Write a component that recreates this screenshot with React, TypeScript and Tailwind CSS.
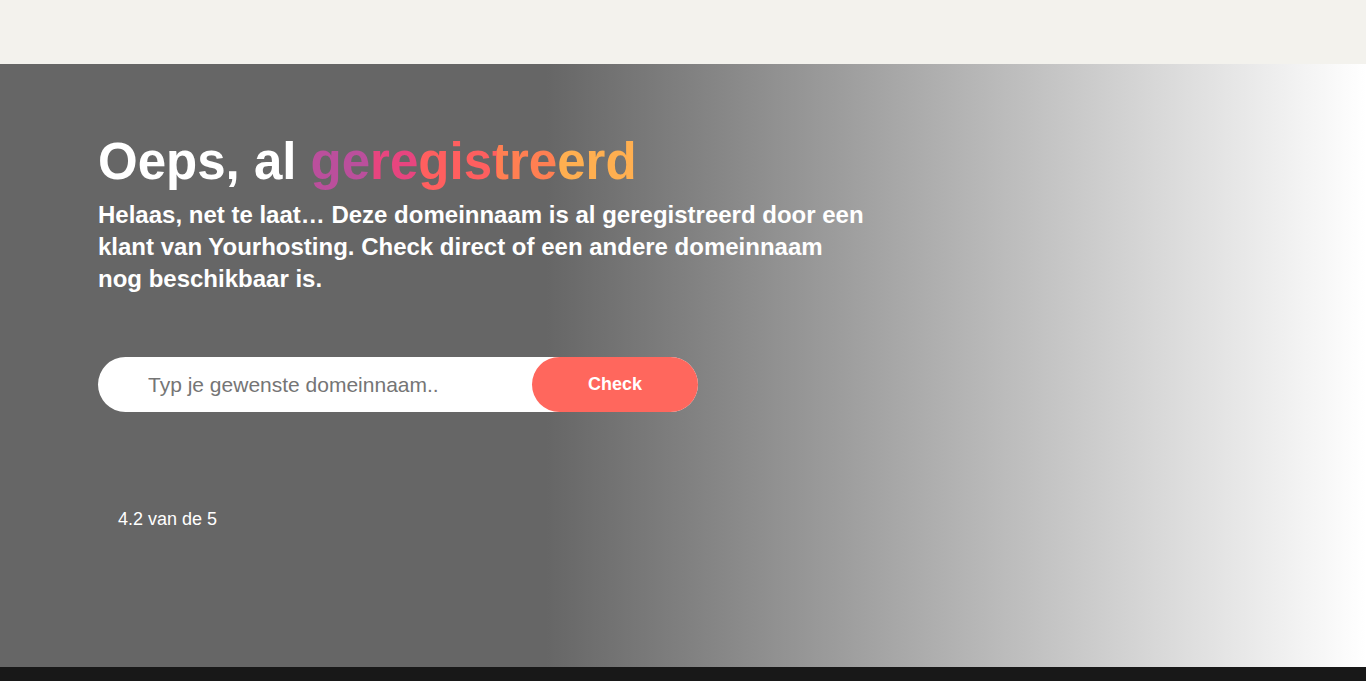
// Domain already registered — hero with search pill.

const FONT = "font-['Liberation_Sans',Arial,sans-serif]";

export default function App() {
  return (
    <div className={`min-h-screen w-full ${FONT}`}>
      {/* top nav strip (empty) */}
      <header className="h-16 w-full bg-[#f3f2ed]" />

      {/* hero */}
      <section className="h-[603px] w-full bg-[linear-gradient(to_right,#666666_40%,#ffffff_100%)]">
        <div className="pl-[98px] pt-[66px]">
          <h1 className="text-[51px] font-bold leading-[64px] text-white">
            Oeps, al{" "}
            <span className="bg-[linear-gradient(to_right,#bb4f9c_0%,#bb4f9c_18.5%,#e7457f_18.5%,#e7457f_33%,#ff5f5f_33%,#ff5f5f_57%,#ff7f52_57%,#ff7f52_75%,#ffaf50_75%,#ffaf50_100%)] bg-clip-text text-transparent">
              geregistreerd
            </span>
          </h1>
          <p className="mt-[5px] w-[770px] text-[24px] font-bold leading-8 text-white">
            Helaas, net te laat… Deze domeinnaam is al geregistreerd door een
            klant van Yourhosting. Check direct of een andere domeinnaam nog
            beschikbaar is.
          </p>

          <form className="mt-[62px] flex h-[55px] w-[600px] items-center rounded-full bg-white">
            <input
              type="text"
              placeholder="Typ je gewenste domeinnaam.."
              className="h-full min-w-0 flex-1 rounded-l-full bg-transparent pl-[50px] text-[21px] text-[#333] outline-none placeholder:text-[#757575]"
            />
            <button
              type="button"
              className="h-full w-[166px] rounded-full bg-[#ff675d] text-[18px] font-bold text-white"
            >
              Check
            </button>
          </form>

          <p className="mt-[94px] pl-5 text-[18px] leading-[27px] text-white">
            4.2 van de 5
          </p>
        </div>
      </section>

      {/* footer strip */}
      <footer className="h-16 w-full bg-[#181818]" />
    </div>
  );
}
